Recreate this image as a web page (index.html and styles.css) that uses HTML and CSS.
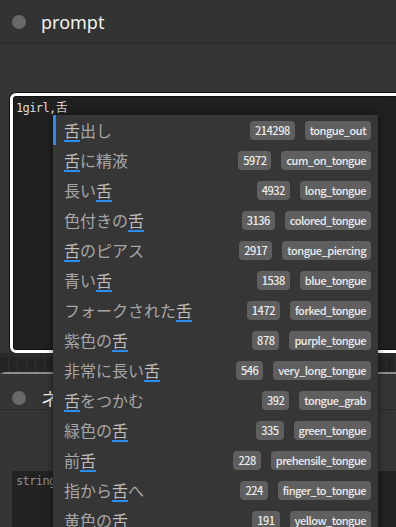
FILE: index.html
```html
<!DOCTYPE html>
<html lang="ja">
    <head>
        <meta charset="UTF-8">
        <title>prompt</title>
        <link rel="stylesheet" href="styles.css">
    </head>
    <body>
        <div class="node">
            <div class="title"><span class="dot"></span><span class="name">prompt</span></div>
            <div class="body">
                <div class="editor">1girl,舌</div>
            </div>
            <div class="ruler"></div>
        </div>
        <div class="node node2">
            <div class="title"><span class="dot"></span><span class="name">ネガティブ</span></div>
            <div class="string">string</div>
        </div>

        <ul class="suggest">
            <li class="sel"><span class="label"><span class="m">舌</span>出し</span><span class="count">214298</span><span class="tag">tongue_out</span></li>
            <li><span class="label"><span class="m">舌</span>に精液</span><span class="count">5972</span><span class="tag">cum_on_tongue</span></li>
            <li><span class="label">長い<span class="m">舌</span></span><span class="count">4932</span><span class="tag">long_tongue</span></li>
            <li><span class="label">色付きの<span class="m">舌</span></span><span class="count">3136</span><span class="tag">colored_tongue</span></li>
            <li><span class="label"><span class="m">舌</span>のピアス</span><span class="count">2917</span><span class="tag">tongue_piercing</span></li>
            <li><span class="label">青い<span class="m">舌</span></span><span class="count">1538</span><span class="tag">blue_tongue</span></li>
            <li><span class="label">フォークされた<span class="m">舌</span></span><span class="count">1472</span><span class="tag">forked_tongue</span></li>
            <li><span class="label">紫色の<span class="m">舌</span></span><span class="count">878</span><span class="tag">purple_tongue</span></li>
            <li><span class="label">非常に長い<span class="m">舌</span></span><span class="count">546</span><span class="tag">very_long_tongue</span></li>
            <li><span class="label"><span class="m">舌</span>をつかむ</span><span class="count">392</span><span class="tag">tongue_grab</span></li>
            <li><span class="label">緑色の<span class="m">舌</span></span><span class="count">335</span><span class="tag">green_tongue</span></li>
            <li><span class="label">前<span class="m">舌</span></span><span class="count">228</span><span class="tag">prehensile_tongue</span></li>
            <li><span class="label">指から<span class="m">舌</span>へ</span><span class="count">224</span><span class="tag">finger_to_tongue</span></li>
            <li><span class="label">黄色の<span class="m">舌</span></span><span class="count">191</span><span class="tag">yellow_tongue</span></li>
        </ul>
    </body>
</html>
```

FILE: styles.css
```css
html, body {
    margin: 0;
    padding: 0;
    height: 527px;
    overflow: hidden;
}

body {
    position: relative;
    background-color: #353535;
    font-family: "Noto Sans", "Noto Sans CJK JP", sans-serif;
}

.title {
    display: flex;
    align-items: center;
    gap: 15px;
    height: 43px;
    padding-left: 12px;
    background-color: #333;
    border-bottom: 1px solid #2a2a2a;
}

.dot {
    width: 14px;
    height: 14px;
    border-radius: 50%;
    background-color: #686868;
}

.name {
    color: #f2f2f2;
    font-size: 18px;
}

.body {
    padding: 49px 0 0 10px;
}

.editor {
    box-sizing: border-box;
    height: 260px;
    margin-right: -30px;
    padding: 4px 3px;
    color: #dcdcdc;
    font-family: "DejaVu Sans Mono", "Noto Sans CJK JP", monospace;
    font-size: 12px;
    line-height: 16px;
    letter-spacing: -0.6px;
    background-color: #202020;
    border: 3px solid #fff;
    border-radius: 6px;
    box-shadow: 0 0 0 1px #141414, inset 0 0 0 1px #111;
}

.ruler {
    box-sizing: border-box;
    height: 19px;
    border-top: 4px solid #2a2a2a;
    background: repeating-linear-gradient(90deg, #242424 0 8px, #303030 8px 9px);
}

.node2 {
    margin-left: -2px;
    border-top: 2px solid #8e8e8e;
    border-left: 2px solid #8e8e8e;
    border-top-left-radius: 8px;
}

.node2 .title {
    box-sizing: border-box;
    height: 36px;
    padding-top: 13px;
    background-color: #353535;
}

.string {
    height: 60px;
    margin: 61px 0 0 12px;
    padding: 3px 4px;
    color: #8c8c8c;
    font-family: "DejaVu Sans Mono", monospace;
    font-size: 12px;
    letter-spacing: -0.6px;
    background-color: #222;
}

/* autocomplete menu */
.suggest {
    position: absolute;
    left: 53px;
    top: 115px;
    width: 325px;
    bottom: -40px;
    margin: 0;
    padding: 0;
    list-style: none;
    background-color: #363636;
    box-shadow: 0 0 8px rgba(0, 0, 0, 0.5);
}

.suggest li {
    display: flex;
    align-items: center;
    box-sizing: border-box;
    height: 30px;
    padding: 0 7px 0 11px;
    color: #a6a6a6;
    font-family: "Noto Sans CJK JP", sans-serif;
    font-size: 16px;
}

.suggest li.sel {
    box-shadow: inset 3px 0 0 #2a8cf0;
}

.label {
    flex: 1;
    white-space: nowrap;
}

.m {
    color: #bdbdbd;
    text-decoration: underline 1.5px #2a8cf0;
    text-underline-offset: 3px;
}

.count, .tag {
    height: 19px;
    padding: 0 5px;
    color: #ececec;
    font-family: "Noto Sans CJK JP", sans-serif;
    font-size: 11px;
    font-weight: 500;
    line-height: 19px;
    letter-spacing: -0.5px;
    border-radius: 4px;
    background-color: #5f5f5f;
}

.count {
    margin-right: 10px;
}
```
